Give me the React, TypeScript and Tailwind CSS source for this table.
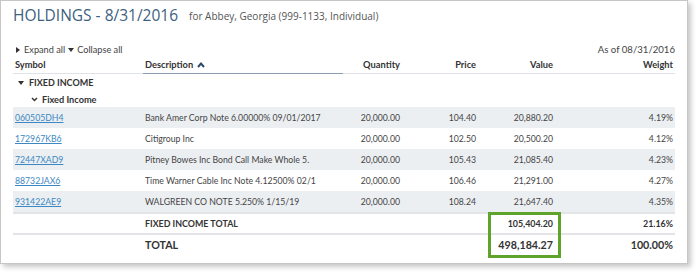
const font = { fontFamily: '"Open Sans", "Noto Sans", sans-serif' };
const body = { fontFamily: 'Lato, "Open Sans", sans-serif' };

const rows = [
  { sym: "060505DH4", desc: "Bank Amer Corp Note 6.00000% 09/01/2017", qty: "20,000.00", price: "104.40", value: "20,880.20", weight: "4.19%" },
  { sym: "172967KB6", desc: "Citigroup Inc", qty: "20,000.00", price: "102.50", value: "20,500.20", weight: "4.12%" },
  { sym: "72447XAD9", desc: "Pitney Bowes Inc Bond Call Make Whole 5.", qty: "20,000.00", price: "105.43", value: "21,085.40", weight: "4.23%" },
  { sym: "88732JAX6", desc: "Time Warner Cable Inc Note 4.12500% 02/1", qty: "20,000.00", price: "106.46", value: "21,291.00", weight: "4.27%" },
  { sym: "931422AE9", desc: "WALGREEN CO NOTE 5.250% 1/15/19", qty: "20,000.00", price: "108.24", value: "21,647.40", weight: "4.35%" },
];

const cols = "grid grid-cols-[130px_200px_58px_77px_77px_120px]";

export default function App() {
  return (
    <div className="h-[273px] w-[697px] bg-white" style={font}>
      <div className="relative h-[264px] w-[688px] border border-[#c6c6c6] bg-white px-[12px] shadow-[3px_3px_5px_rgba(0,0,0,0.22)]">
        <div className="mt-[4px] flex h-[20px] items-end gap-[11px]">
          <span className="text-[15.5px] leading-[20px] text-[#3d5f80]">HOLDINGS - 8/31/2016</span>
          <span className="pb-[2px] text-[10px] leading-[14px] text-[#555]">
            for Abbey, Georgia (999-1133, Individual)
          </span>
        </div>

        <div style={body}>
          <div className="mt-[18px] flex h-[14px] items-center justify-between text-[9.2px] text-[#444]">
            <div className="flex items-center pl-[3px]">
              <span className="mr-[4px] inline-block h-0 w-0 border-y-[3px] border-l-[4px] border-y-transparent border-l-[#333]" />
              <span>Expand all</span>
              <span className="ml-[3px] mr-[3px] inline-block h-0 w-0 border-x-[3px] border-t-[4px] border-x-transparent border-t-[#333]" />
              <span>Collapse all</span>
            </div>
            <span className="text-[9.6px]">As of 08/31/2016</span>
          </div>

          <div className={`${cols} h-[17px] items-center text-[9.3px] font-bold text-[#333]`}>
            <div className="flex h-full items-center border-b border-[#dfe3e8] pl-[2px]">Symbol</div>
            <div className="flex h-full items-center border-b border-[#8c9cb0] pl-[2px]">
              Description
              <svg className="ml-[4px]" width="8" height="6" viewBox="0 0 8 6">
                <path d="M1 5 L4 1.6 L7 5" fill="none" stroke="#2d4a6a" strokeWidth="2" />
              </svg>
            </div>
            <div className="flex h-full items-center justify-end border-b border-[#dfe3e8] pr-[1px]">Quantity</div>
            <div className="flex h-full items-center justify-end border-b border-[#dfe3e8] pr-[2px]">Price</div>
            <div className="flex h-full items-center justify-end border-b border-[#dfe3e8] pr-[2px]">Value</div>
            <div className="flex h-full items-center justify-end border-b border-[#dfe3e8] pr-[2px]">Weight</div>
          </div>

          <div className="flex h-[18px] items-center pl-[5px] text-[9px] font-bold text-[#333]">
            <span className="mr-[5px] inline-block h-0 w-0 border-x-[3px] border-t-[4px] border-x-transparent border-t-[#333]" />
            FIXED INCOME
          </div>
          <div className="flex h-[15px] items-center pl-[18px] text-[9.2px] font-bold text-[#333]">
            <svg className="mr-[4px]" width="7" height="5" viewBox="0 0 7 5">
              <path d="M1 1 L3.5 3.6 L6 1" fill="none" stroke="#333" strokeWidth="1.4" />
            </svg>
            Fixed Income
          </div>

          {rows.map((r, i) => (
            <div
              key={r.sym}
              className={`${cols} h-[21px] items-center text-[8.7px] text-[#444] ${i % 2 === 0 ? "bg-[#eceff2]" : "bg-white"}`}
            >
              <div className="pl-[2px]">
                <span className="text-[#3b88c3] underline">{r.sym}</span>
              </div>
              <div className="whitespace-nowrap pl-[2px]">{r.desc}</div>
              <div className="text-right pr-[1px]">{r.qty}</div>
              <div className="text-right pr-[2px]">{r.price}</div>
              <div className="text-right pr-[2px]">{r.value}</div>
              <div className="text-right pr-[2px]">{r.weight}</div>
            </div>
          ))}

          <div className="relative">
            <div className={`${cols} h-[21px] items-center border-t-2 border-[#e2e4e7] text-[8.9px] font-bold text-[#333]`}>
              <div />
              <div className="pl-[2px]">FIXED INCOME TOTAL</div>
              <div />
              <div />
              <div className="text-right pr-[2px]">105,404.20</div>
              <div className="text-right pr-[2px]">21.16%</div>
            </div>
            <div className={`${cols} h-[23px] items-center border-t-2 border-[#e2e4e7] text-[10.7px] font-bold text-[#333]`}>
              <div />
              <div className="pl-[2px]">TOTAL</div>
              <div />
              <div />
              <div className="text-right pr-[2px]">498,184.27</div>
              <div className="text-right pr-[2px]">100.00%</div>
            </div>
            <div className="absolute left-[475px] top-0 h-[46px] w-[73px] border-[3px] border-[#5ea32a]" />
          </div>
        </div>
      </div>
    </div>
  );
}
